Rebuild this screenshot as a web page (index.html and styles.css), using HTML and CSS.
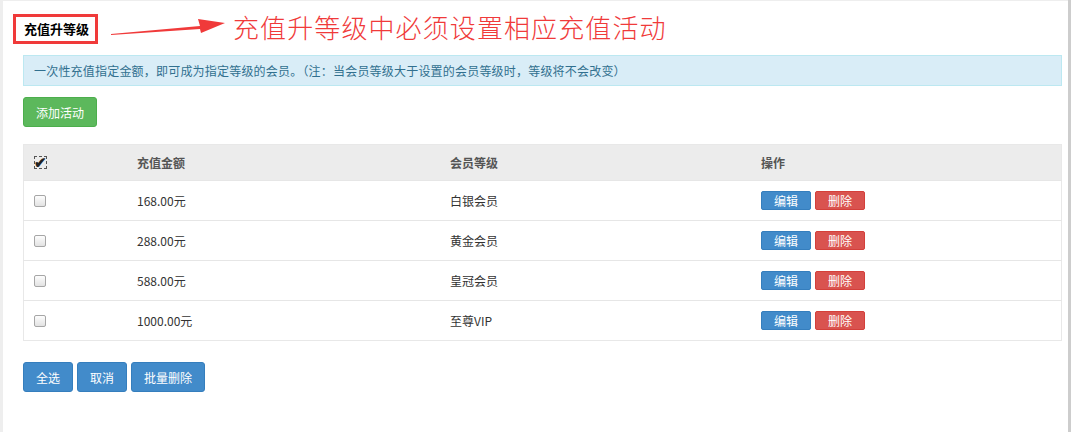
FILE: index.html
```html
<!DOCTYPE html>
<html lang="zh-CN">
<head>
    <meta charset="UTF-8">
    <title>充值升等级</title>
    <link rel="stylesheet" href="styles.css">
</head>
<body>
    <div class="panel">
        <div class="title-row">
            <div class="title-box">充值升等级</div>
            <svg class="arrow" width="116" height="26" viewBox="0 0 116 26">
                <polygon points="0,21 89,13 87,6 114,10 90,20 89,16 0,22" fill="#f03a3a"/>
            </svg>
            <span class="note">充值升等级中必须设置相应充值活动</span>
        </div>
        <div class="alert">一次性充值指定金额，即可成为指定等级的会员。（注：当会员等级大于设置的会员等级时，等级将不会改变）</div>
        <button class="btn btn-green">添加活动</button>
        <table class="list">
            <thead>
                <tr>
                    <th class="col-check"><span class="check-all">&#10004;</span></th>
                    <th class="col-money">充值金额</th>
                    <th class="col-level">会员等级</th>
                    <th>操作</th>
                </tr>
            </thead>
            <tbody>
                <tr>
                    <td class="col-check"><span class="box"></span></td>
                    <td>168.00元</td>
                    <td>白银会员</td>
                    <td><button class="btn-sm btn-blue">编辑</button><button class="btn-sm btn-red">删除</button></td>
                </tr>
                <tr>
                    <td class="col-check"><span class="box"></span></td>
                    <td>288.00元</td>
                    <td>黄金会员</td>
                    <td><button class="btn-sm btn-blue">编辑</button><button class="btn-sm btn-red">删除</button></td>
                </tr>
                <tr>
                    <td class="col-check"><span class="box"></span></td>
                    <td>588.00元</td>
                    <td>皇冠会员</td>
                    <td><button class="btn-sm btn-blue">编辑</button><button class="btn-sm btn-red">删除</button></td>
                </tr>
                <tr>
                    <td class="col-check"><span class="box"></span></td>
                    <td>1000.00元</td>
                    <td>至尊VIP</td>
                    <td><button class="btn-sm btn-blue">编辑</button><button class="btn-sm btn-red">删除</button></td>
                </tr>
            </tbody>
        </table>
        <div class="actions">
            <button class="btn btn-blue">全选</button>
            <button class="btn btn-blue">取消</button>
            <button class="btn btn-blue">批量删除</button>
        </div>
    </div>
</body>
</html>
```

FILE: styles.css
```css
html, body {
    height: 100%;
}
body {
    margin: 0;
    padding: 1px 0 0 3px;
    box-sizing: border-box;
    background-color: #eeeeee;
    border-right: 3px solid #cdcdcd;
    font-family: "Noto Sans CJK SC", "Noto Sans", sans-serif;
    font-size: 12px;
    color: #333;
    overflow: hidden;
}
.panel {
    background-color: #fff;
    height: 100%;
    padding: 13px 5px 0 20px;
    box-sizing: border-box;
}
.title-row {
    display: flex;
    align-items: center;
    height: 30px;
    margin-left: -10px;
}
.title-box {
    border: 3px solid #f03a3a;
    padding: 0 6px 0 8px;
    height: 24px;
    line-height: 24px;
    font-size: 13px;
    font-weight: bold;
    color: #000;
}
.arrow {
    margin-left: 13px;
    margin-top: -6px;
}
.note {
    margin-left: 6px;
    margin-top: -6px;
    font-size: 26px;
    font-weight: 300;
    color: #f03a3a;
    letter-spacing: 1.1px;
}
.alert {
    margin-top: 11px;
    height: 29px;
    line-height: 29px;
    padding-left: 10px;
    width: 1027px;
    background-color: #d9edf7;
    border: 1px solid #bce8f1;
    color: #31708f;
    letter-spacing: 0.2px;
}
.btn {
    font-family: inherit;
    font-size: 12px;
    color: #fff;
    height: 30px;
    padding: 0 12px;
    border-radius: 3px;
    cursor: pointer;
}
.btn-green {
    margin-top: 11px;
    background-color: #5cb85c;
    border: 1px solid #4cae4c;
}
.btn-blue {
    background-color: #428bca;
    border: 1px solid #357ebd;
}
.btn-red {
    background-color: #d9534f;
    border: 1px solid #d43f3a;
}
.list {
    margin-top: 17px;
    width: 1039px;
    border-collapse: collapse;
    border: 1px solid #e8e8e8;
}
.list th {
    background-color: #ececec;
    height: 35px;
    text-align: left;
    font-weight: bold;
    color: #555;
    padding: 0;
}
.list td {
    height: 39px;
    padding: 0;
    border-top: 1px solid #e6e6e6;
    color: #333;
}
.list .col-check {
    width: 103px;
    padding-left: 10px;
}
.col-money {
    width: 313px;
}
.col-level {
    width: 311px;
}
.check-all {
    display: inline-block;
    width: 11px;
    height: 11px;
    border: 1px dashed #555;
    line-height: 9px;
    font-size: 15px;
    color: #222;
    text-indent: -1px;
}
.box {
    display: inline-block;
    width: 10px;
    height: 10px;
    vertical-align: middle;
    margin-top: -3px;
    border: 1px solid #a6a6a6;
    border-radius: 2px;
    background: linear-gradient(#fdfdfd, #e2e2e2);
}
.btn-sm {
    font-family: inherit;
    font-size: 12px;
    color: #fff;
    height: 19px;
    width: 50px;
    padding: 0;
    margin-right: 4px;
    margin-top: -3px;
    border-radius: 2px;
    vertical-align: middle;
}
.actions {
    display: flex;
    gap: 4px;
    margin-top: 21px;
}
```
